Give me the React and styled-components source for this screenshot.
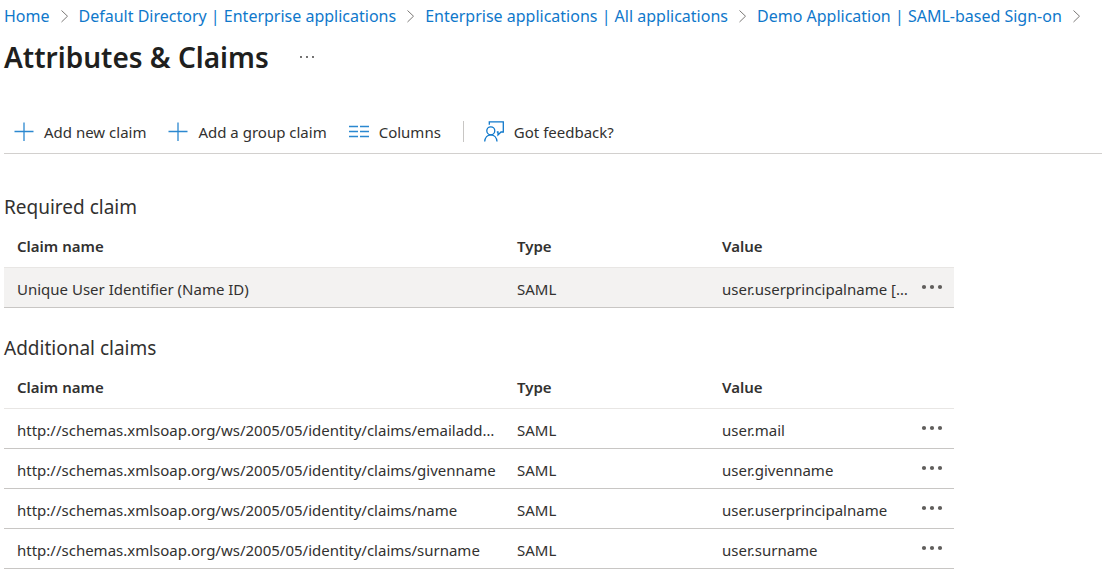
import React from 'react';
import styled, { createGlobalStyle } from 'styled-components';

const GlobalStyle = createGlobalStyle`
  *, *::before, *::after { box-sizing: border-box; }
  body {
    margin: 0;
    background: #fff;
    color: #323130;
    font-family: "Segoe UI", "Noto Sans", "Open Sans", sans-serif;
    font-size: 15px;
    line-height: 20px;
  }
`;

const Page = styled.div`
  padding-left: 4px;
`;

const Breadcrumb = styled.nav`
  ol {
    display: flex;
    margin: 0;
    padding: 4px 0 0;
    list-style: none;
    white-space: nowrap;
  }
  li {
    display: flex;
    align-items: center;
    font-size: 16px;
    line-height: 24px;
  }
  svg { margin: 0 10px; }
`;

const Crumb = styled.a`
  color: #0f78cb;
  text-decoration: none;
  &:hover { text-decoration: underline; }
`;

const TitleRow = styled.header`
  display: flex;
  align-items: center;
  gap: 30px;
  padding-top: 10px;
`;

const Title = styled.h1`
  margin: 0;
  color: #201f1e;
  font-size: 28px;
  font-weight: 600;
  line-height: 38px;
`;

const IconButton = styled.button`
  display: inline-flex;
  align-items: center;
  justify-content: center;
  padding: 4px 0;
  border: 0;
  background: none;
  color: ${(p) => p.$color};
  cursor: pointer;
`;

const Toolbar = styled.div`
  display: flex;
  align-items: center;
  gap: 20px;
  height: 44px;
  margin-top: 34px;
  padding-left: 10px;
  border-bottom: 1px solid #d2d0ce;
`;

const Command = styled.button`
  display: flex;
  align-items: center;
  gap: 10px;
  padding: 0 2px 0 0;
  border: 0;
  background: none;
  color: inherit;
  font: inherit;
  white-space: nowrap;
  cursor: pointer;
`;

const Divider = styled.span`
  width: 1px;
  height: 21px;
  background: #c8c6c4;
`;

const Section = styled.section`
  padding-top: ${(p) => p.$space}px;
`;

const SectionTitle = styled.h2`
  margin: 0;
  font-size: 19px;
  font-weight: 400;
  line-height: 28px;
`;

const Table = styled.table`
  width: 100%;
  max-width: 950px;
  margin-top: 4px;
  border-collapse: separate;
  border-spacing: 0;
  table-layout: fixed;
`;

const Column = styled.col`
  width: ${(p) => p.$width};
`;

const HeadCell = styled.th`
  height: 43px;
  padding: 0 0 0 13px;
  border-bottom: 1px solid #e8e6e4;
  font-size: 15px;
  font-weight: 600;
  text-align: left;
`;

const Cell = styled.td`
  height: 40px;
  padding: 2px 0 0 13px;
  overflow: hidden;
  border-bottom: 1px solid #c8c6c4;
  text-overflow: ellipsis;
  white-space: nowrap;
`;

const NameCell = styled(Cell)`
  padding-right: 6px;
`;

const ActionCell = styled(Cell)`
  padding: 0 0 4px;
  line-height: 16px;
  text-align: center;
`;

const Row = styled.tr`
  background: ${(p) => (p.$active ? '#f3f2f1' : 'transparent')};
`;

const Chevron = () => (
  <svg width="9" height="14" viewBox="0 0 9 14" fill="none" stroke="#7a7876" aria-hidden="true">
    <path d="M1.5 1.5 7.5 7.2 1.5 13" />
  </svg>
);

const PlusIcon = () => (
  <svg width="20" height="20" viewBox="0 0 20 20" fill="none" stroke="#2b88d0" strokeWidth="1.3" aria-hidden="true">
    <path d="M10 .5v18.500M.5 9.500h19" />
  </svg>
);

const ColumnsIcon = () => (
  <svg width="20" height="20" viewBox="0 0 20 20" fill="none" stroke="#2b88d0" strokeWidth="1.3" aria-hidden="true">
    <path d="M0 4.500h9M11 4.500h9M0 9.500h9M11 9.500h9M0 14.500h9M11 14.500h9" />
  </svg>
);

const FeedbackIcon = () => (
  <svg width="20" height="22" viewBox="0 0 20 22" fill="none" stroke="#0f78cb" strokeWidth="1.3" aria-hidden="true">
    <circle cx="6.800" cy="9.800" r="4" />
    <path d="M.7 20.500c.3-3.900 2.800-6.700 6.100-6.700s5.900 2.800 6.200 6.700" />
    <path d="M5.300 3.800V.8h14v10.200h-2.300l-3 3v-3h-1.200" />
  </svg>
);

const Dots = ({ width, step, radius }) => (
  <svg width={width} height="8" viewBox={`0 0 ${width} 8`} fill="currentColor" aria-hidden="true">
    {[-1, 0, 1].map((i) => (
      <circle key={i} cx={width / 2 + i * step} cy="4" r={radius} />
    ))}
  </svg>
);

const crumbs = [
  'Home',
  'Default Directory | Enterprise applications',
  'Enterprise applications | All applications',
  'Demo Application | SAML-based Sign-on',
];

const schema = 'http://schemas.xmlsoap.org/ws/2005/05/identity/claims/';

const required = [
  {
    name: 'Unique User Identifier (Name ID)',
    value: 'user.userprincipalname [nameid-format:emailAddress]',
    active: true,
  },
];

const additional = [
  { name: `${schema}emailaddress`, value: 'user.mail' },
  { name: `${schema}givenname`, value: 'user.givenname' },
  { name: `${schema}name`, value: 'user.userprincipalname' },
  { name: `${schema}surname`, value: 'user.surname' },
];

function ClaimsTable({ id, rows }) {
  return (
    <Table aria-labelledby={id}>
      <colgroup>
        <Column $width="500px" />
        <Column $width="205px" />
        <Column />
        <Column $width="44px" />
      </colgroup>
      <thead>
        <tr>
          <HeadCell scope="col">Claim name</HeadCell>
          <HeadCell scope="col">Type</HeadCell>
          <HeadCell scope="col">Value</HeadCell>
          <HeadCell as="td" />
        </tr>
      </thead>
      <tbody>
        {rows.map((row) => (
          <Row key={row.name} $active={row.active}>
            <NameCell title={row.name}>{row.name}</NameCell>
            <Cell>SAML</Cell>
            <Cell title={row.value}>{row.value}</Cell>
            <ActionCell>
              <IconButton type="button" $color="#605e5c" aria-label={`Actions for ${row.name}`}>
                <Dots width={22} step={8} radius={2.1} />
              </IconButton>
            </ActionCell>
          </Row>
        ))}
      </tbody>
    </Table>
  );
}

export default function App() {
  return (
    <>
      <GlobalStyle />
      <Page>
        <Breadcrumb aria-label="Breadcrumb">
          <ol>
            {crumbs.map((crumb) => (
              <li key={crumb}>
                <Crumb href="#">{crumb}</Crumb>
                <Chevron />
              </li>
            ))}
          </ol>
        </Breadcrumb>
        <TitleRow>
          <Title>Attributes &amp; Claims</Title>
          <IconButton type="button" $color="#323130" aria-label="More">
            <Dots width={16} step={6} radius={0.9} />
          </IconButton>
        </TitleRow>
        <Toolbar role="toolbar" aria-label="Claim commands">
          <Command type="button"><PlusIcon />Add new claim</Command>
          <Command type="button"><PlusIcon />Add a group claim</Command>
          <Command type="button"><ColumnsIcon />Columns</Command>
          <Divider />
          <Command type="button"><FeedbackIcon />Got feedback?</Command>
        </Toolbar>
        <main>
          <Section $space={39}>
            <SectionTitle id="required-claim">Required claim</SectionTitle>
            <ClaimsTable id="required-claim" rows={required} />
          </Section>
          <Section $space={26}>
            <SectionTitle id="additional-claims">Additional claims</SectionTitle>
            <ClaimsTable id="additional-claims" rows={additional} />
          </Section>
        </main>
      </Page>
    </>
  );
}
